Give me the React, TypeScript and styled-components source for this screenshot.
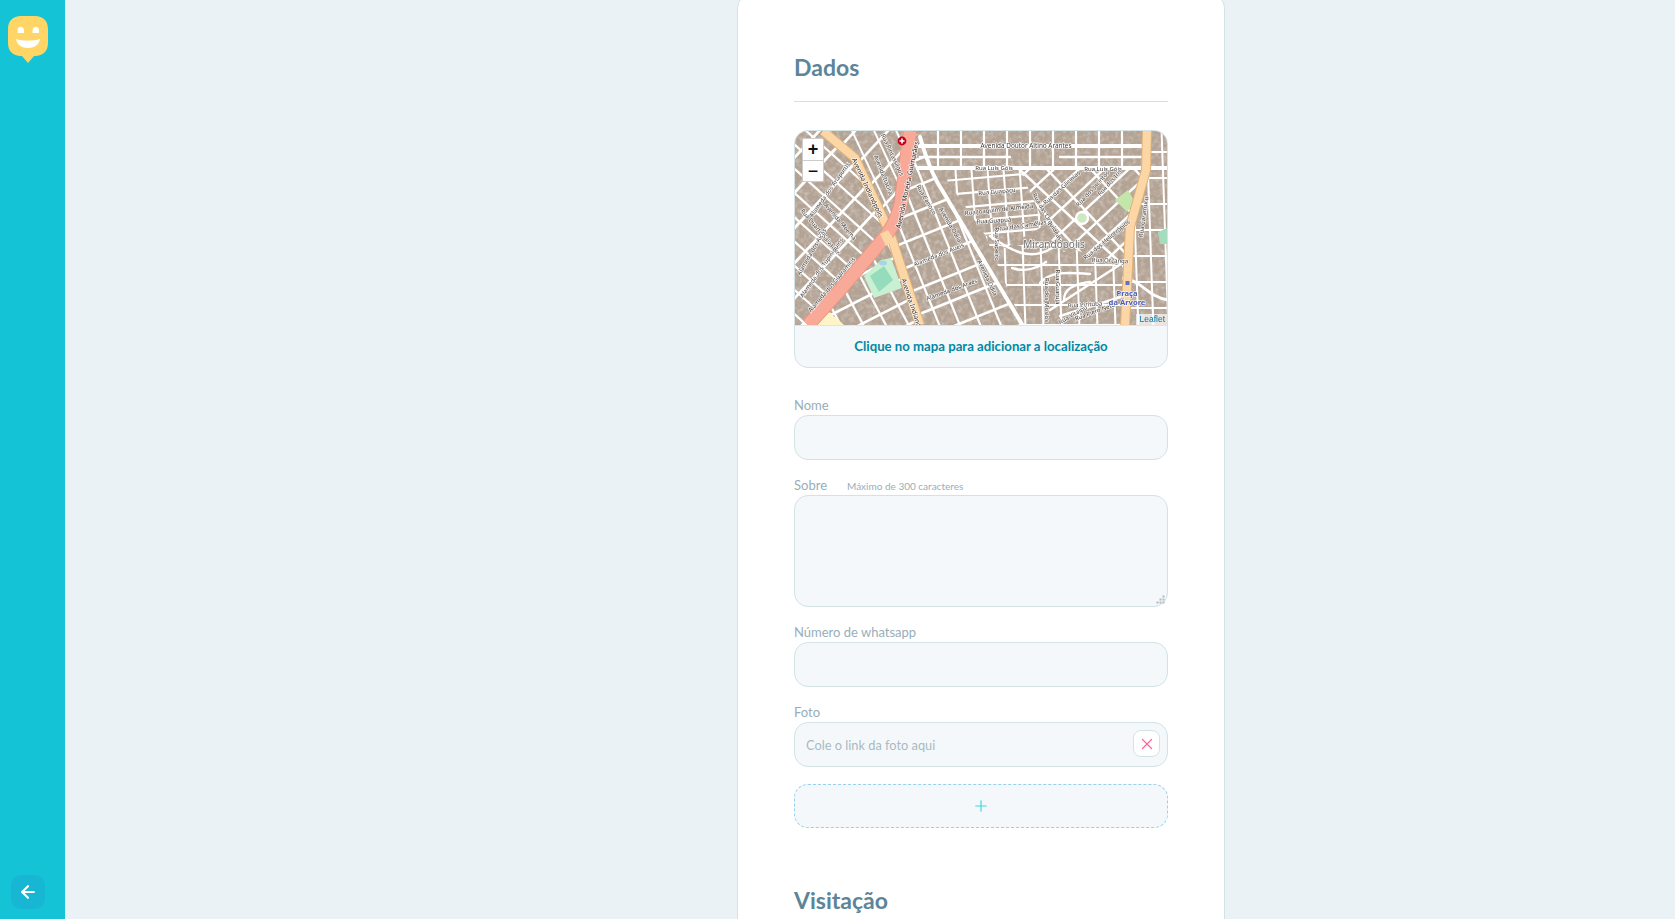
import styled, { createGlobalStyle } from "styled-components";
import { ArrowLeft, Plus, X } from "lucide-react";

const GlobalStyle = createGlobalStyle`
	* {
		box-sizing: border-box;
	}

	html,
	body {
		margin: 0;
		height: 100%;
		overflow: hidden;
		background: #ebf2f5;
		font-family: Lato, "Open Sans", sans-serif;
	}
`;

const Page = styled.div`
	display: flex;
	height: 100vh;
	overflow: hidden;
`;

const Sidebar = styled.aside`
	display: flex;
	flex-direction: column;
	align-items: center;
	justify-content: space-between;
	flex: 0 0 65px;
	padding: 16px 9px 10px 0;
	background: #15c3d6;
`;

const BackButton = styled.button`
	display: flex;
	align-items: center;
	justify-content: center;
	width: 34px;
	height: 34px;
	padding: 0;
	border: 0;
	border-radius: 10px;
	background: #17b6d3;
	color: #fff;
`;

const Main = styled.main`
	flex: 1;
	padding-left: 672px;
`;

const Card = styled.form`
	width: 488px;
	margin-top: -6px;
	padding: 0 56px 80px;
	background: #fff;
	border: 1px solid #d3e2e5;
	border-radius: 14px;
`;

const Legend = styled.h2`
	margin: 57px 0 0;
	font-size: 23px;
	line-height: 30px;
	font-weight: 700;
	color: #5c8599;
`;

const Rule = styled.hr`
	height: 1px;
	margin: 19px 0 28px;
	border: 0;
	background: #d3e2e5;
`;

const MapBox = styled.div`
	overflow: hidden;
	background: #f5f8fa;
	border: 1px solid #d3e2e5;
	border-radius: 14px;
`;

const MapFrame = styled.div`
	position: relative;
	height: 194px;
`;

const MapCaption = styled.div`
	height: 42px;
	border-top: 1px solid #dde3f0;
	font-size: 13.2px;
	font-weight: 700;
	line-height: 40px;
	text-align: center;
	color: #0089a5;
`;

const ZoomControl = styled.div`
	position: absolute;
	top: 7px;
	left: 7px;
	width: 22px;
	overflow: hidden;
	background: #fff;
	border: 1px solid #ccc;
	border-radius: 2px;
`;

const ZoomButton = styled.div<{ $thin?: boolean }>`
	height: 21px;
	font-family: "Liberation Sans", sans-serif;
	font-size: 18px;
	font-weight: ${(p) => (p.$thin ? 400 : 700)};
	line-height: 20px;
	text-align: center;
	color: #111;

	& + & {
		border-top: 1px solid #ccc;
	}
`;

const Attribution = styled.div`
	position: absolute;
	right: 0;
	bottom: 0;
	padding: 0 2px 0 3px;
	background: rgba(255, 255, 255, 0.7);
	font-family: "Liberation Sans", sans-serif;
	font-size: 8.5px;
	line-height: 11px;
	color: #0078a8;
`;

const Field = styled.div<{ $first?: boolean }>`
	margin-top: ${(p) => (p.$first ? "29px" : "17px")};
`;

const Label = styled.label`
	display: block;
	height: 18px;
	font-size: 13px;
	line-height: 16px;
	color: #98aeb9;
`;

const Hint = styled.span`
	margin-left: 20px;
	font-size: 10px;
	color: #98aeb9;
`;

const Input = styled.input`
	display: block;
	width: 100%;
	height: 45px;
	padding: 0 11px;
	background: #f5f8fa;
	border: 1px solid #d3e2e5;
	border-radius: 14px;
	outline: none;
	font-family: inherit;
	font-size: 12.8px;
	color: #5c8599;

	&::placeholder {
		color: #a9bac3;
	}
`;

const TextAreaBox = styled.div`
	position: relative;
`;

const TextArea = styled.textarea`
	display: block;
	width: 100%;
	height: 112px;
	padding: 12px;
	background: #f5f8fa;
	border: 1px solid #d3e2e5;
	border-radius: 14px;
	outline: none;
	resize: none;
`;

const ResizeGrip = styled.svg`
	position: absolute;
	right: 3px;
	bottom: 3px;
`;

const PhotoRow = styled.div`
	position: relative;
`;

const RemoveButton = styled.button`
	position: absolute;
	top: 8px;
	right: 8px;
	display: flex;
	align-items: center;
	justify-content: center;
	width: 27px;
	height: 27px;
	padding: 0;
	background: #fff;
	border: 1px solid #d3e2e5;
	border-radius: 8px;
	color: #ff669d;
`;

const AddButton = styled.button`
	display: flex;
	align-items: center;
	justify-content: center;
	width: 100%;
	height: 44px;
	margin-top: 17px;
	padding: 0 0 1px;
	background: #f5f8fa;
	border: 1px dashed #96d2f0;
	border-radius: 14px;
	color: #45d4e2;
`;

const MapSvg = styled.svg`
	display: block;
	width: 100%;
	height: 100%;
`;

const Street = styled.line<{ $w: number }>`
	stroke: #fff;
	stroke-width: ${(p) => p.$w}px;
`;

const Curve = styled.path<{ $w?: number }>`
	fill: none;
	stroke: #fff;
	stroke-width: ${(p) => p.$w ?? 2}px;
	stroke-linecap: round;
`;

const Road = styled.path<{ $w: number; $color: string }>`
	fill: none;
	stroke: ${(p) => p.$color};
	stroke-width: ${(p) => p.$w}px;
	stroke-linejoin: round;
`;

const MapLabel = styled.text<{ $size?: number; $color?: string; $bold?: boolean }>`
	font-family: "Noto Sans", "Open Sans", sans-serif;
	font-size: ${(p) => p.$size ?? 6}px;
	font-weight: ${(p) => (p.$bold ? 700 : 400)};
	fill: ${(p) => p.$color ?? "#3f3a36"};
	stroke: rgba(255, 255, 255, 0.85);
	stroke-width: 1.3px;
	paint-order: stroke;
	text-anchor: middle;
	dominant-baseline: middle;
`;

type Grid = { clip: string; cx: number; cy: number; angle: number; spacing: number; w: number };

const REGIONS: Record<string, string> = {
	west: "795,131 823,131 855,158 886,235 808,325 795,325",
	wedge: "823,131 907,131 903,203 887,237 855,158",
	odila: "913,131 920,137 940,187 1023,325 920,325 890,233 903,203",
	south: "887,237 920,325 808,325",
	north: "918,131 1146,131 1146,170 934,170",
	rows: "940,170 1020,170 1045,225 1005,248 985,235",
	fan: "1020,170 1142,170 1128,232 1124,268 1050,240 1045,225",
	lower: "985,235 1005,248 1050,240 1124,268 1122,325 1023,325",
	east: "1150,131 1168,131 1168,325 1130,325 1132,232",
};

const GRIDS: Grid[] = [
	{ clip: "west", cx: 830, cy: 225, angle: -47, spacing: 24, w: 2.8 },
	{ clip: "west", cx: 830, cy: 225, angle: 42, spacing: 18, w: 2.2 },
	{ clip: "wedge", cx: 875, cy: 180, angle: -47, spacing: 24, w: 2.6 },
	{ clip: "wedge", cx: 875, cy: 180, angle: 65, spacing: 20, w: 2 },
	{ clip: "odila", cx: 950, cy: 250, angle: -22, spacing: 24, w: 2.6 },
	{ clip: "odila", cx: 950, cy: 250, angle: 68, spacing: 19, w: 2.2 },
	{ clip: "south", cx: 870, cy: 295, angle: -27, spacing: 22, w: 2.6 },
	{ clip: "south", cx: 870, cy: 295, angle: 62, spacing: 20, w: 2.2 },
	{ clip: "north", cx: 1030, cy: 150, angle: 90, spacing: 23, w: 2.2 },
	{ clip: "rows", cx: 990, cy: 205, angle: -5, spacing: 14, w: 2.2 },
	{ clip: "rows", cx: 990, cy: 205, angle: 86, spacing: 16, w: 2 },
	{ clip: "fan", cx: 1085, cy: 210, angle: -43, spacing: 17, w: 2.4 },
	{ clip: "fan", cx: 1085, cy: 210, angle: 47, spacing: 32, w: 2.4 },
	{ clip: "lower", cx: 1060, cy: 285, angle: 0, spacing: 20, w: 2 },
	{ clip: "lower", cx: 1060, cy: 285, angle: 88, spacing: 18, w: 2 },
	{ clip: "east", cx: 1150, cy: 230, angle: 0, spacing: 26, w: 2 },
	{ clip: "east", cx: 1150, cy: 230, angle: 88, spacing: 15, w: 2 },
];

const gridLines = ({ cx, cy, angle, spacing }: Grid) => {
	const rad = (angle * Math.PI) / 180;
	const dx = Math.cos(rad);
	const dy = Math.sin(rad);
	const lines = [];
	for (let i = -16; i <= 16; i++) {
		const ox = cx - dy * spacing * i;
		const oy = cy + dx * spacing * i;
		lines.push({ x1: ox - dx * 400, y1: oy - dy * 400, x2: ox + dx * 400, y2: oy + dy * 400 });
	}
	return lines;
};

const MAJOR_STREETS = [
	"M920 137 C926 158 932 175 942 190 L1023 326",
	"M918 146 H1146",
	"M918 168 H1168",
];

const MINOR_STREETS = [
	"M920 157 H1010",
	"M1060 157 H1146",
	"M1020 170 L1124 266",
	"M990 236 C1010 250 1030 262 1052 248",
	"M1046 262 C1034 270 1024 272 1012 268",
	"M1040 283 C1050 272 1062 272 1090 274",
	"M1064 300 C1064 290 1072 284 1090 282",
	"M1060 316 L1124 296",
	"M1124 262 L1050 310",
];

const LABELS: { x: number; y: number; a?: number; t: string; size?: number; color?: string; bold?: boolean }[] = [
	{ x: 1026, y: 146, t: "Avenida Doutor Altino Arantes", size: 6.4 },
	{ x: 994, y: 168, t: "Rua Luís Góis" },
	{ x: 1103, y: 169, t: "Rua Luís Góis" },
	{ x: 997, y: 192, a: -5, t: "Rua Guapaçu" },
	{ x: 999, y: 210, a: -6, t: "Rua Joaquim de Almeida" },
	{ x: 994, y: 221, a: -4, t: "Rua Guapuá" },
	{ x: 1022, y: 226, a: -8, t: "Rua das Camélias" },
	{ x: 1062, y: 188, a: -42, t: "Rua das Glicínias" },
	{ x: 1093, y: 189, a: -48, t: "Rua dos Jacintos" },
	{ x: 1110, y: 183, a: -48, t: "Rua dos Iris" },
	{ x: 1047, y: 217, a: 60, t: "Rua das Orquídeas" },
	{ x: 1107, y: 240, a: -40, t: "Rua dos Heliotrópios" },
	{ x: 1110, y: 261, a: 2, t: "Rua Orçanga" },
	{ x: 1144, y: 217, a: -82, t: "Rua Caramuru" },
	{ x: 1085, y: 305, a: -4, t: "Rua Pirituba" },
	{ x: 1073, y: 315, a: -30, t: "Rua Vitaipu" },
	{ x: 1095, y: 312, a: -20, t: "Rua Piero Neto" },
	{ x: 1047, y: 300, a: 90, t: "Rua dos Moslos" },
	{ x: 1058, y: 287, a: 90, t: "Rua Guarujá" },
	{ x: 997, y: 244, a: 90, t: "Rua Sapeíro" },
	{ x: 950, y: 225, a: 60, t: "Avenida Odila" },
	{ x: 987, y: 278, a: 65, t: "Avenida Odila" },
	{ x: 926, y: 200, a: 60, t: "Rua Carioso" },
	{ x: 939, y: 255, a: -22, t: "Alameda dos Aueis" },
	{ x: 952, y: 290, a: -20, t: "Alameda dos Araés" },
	{ x: 908, y: 185, a: -78, t: "Avenida Moreira Guimarães", size: 6.8, color: "#2e2422" },
	{ x: 867, y: 188, a: 65, t: "Avenida Indianópolis", size: 6.6, color: "#2e2422" },
	{ x: 911, y: 303, a: 72, t: "Avenida Indianó", size: 6.6, color: "#2e2422" },
	{ x: 883, y: 175, a: 68, t: "Avenida Itacira" },
	{ x: 892, y: 155, a: 65, t: "Rua Pintassilgos" },
	{ x: 830, y: 190, a: -55, t: "Alameda dos Anapurús" },
	{ x: 840, y: 222, a: 50, t: "Avenida Moema" },
	{ x: 820, y: 232, a: 50, t: "Rua Duarte Salvador" },
	{ x: 812, y: 252, a: -60, t: "Alameda dos Aicás" },
	{ x: 822, y: 268, a: -55, t: "Alameda dos Tupiniquins" },
	{ x: 832, y: 285, a: -50, t: "Alameda dos Guaramiris" },
	{ x: 1054, y: 245, t: "Mirandópolis", size: 10, color: "#6f6f6f" },
	{ x: 1127, y: 294, t: "Praça", size: 7.6, color: "#4a5cc0", bold: true },
	{ x: 1127, y: 303, t: "da Árvore", size: 7.6, color: "#4a5cc0", bold: true },
];

const HappyLogo = () => (
	<svg width="40" height="48" viewBox="0 0 40 48">
		<path
			d="M13 0H27C35 0 40 5 40 13V27C40 35 35 40 27 40H26L20 47L14 40H13C5 40 0 35 0 27V13C0 5 5 0 13 0Z"
			fill="#ffd666"
		/>
		<path d="M9.5 17V14.5C9.5 9.5 16 9.5 16 14.5V17Z" fill="#fff" />
		<path d="M24.5 17V14.5C24.5 9.5 31 9.5 31 14.5V17Z" fill="#fff" />
		<path d="M8 23C14 25 26 25 32 23C31 29 26 32 20 32C14 32 9 29 8 23Z" fill="#fff" />
	</svg>
);

const StreetMap = () => (
	<MapSvg viewBox="795 131 372 194" preserveAspectRatio="none">
		<defs>
			{Object.entries(REGIONS).map(([id, points]) => (
				<clipPath id={id} key={id}>
					<polygon points={points} />
				</clipPath>
			))}
			<filter id="speckle" x="0" y="0" width="100%" height="100%">
				<feTurbulence type="fractalNoise" baseFrequency="0.22" numOctaves="2" seed="4" />
				<feColorMatrix values="0 0 0 0 0.81  0 0 0 0 0.76  0 0 0 0 0.7  1 0 0 0 -0.42" />
			</filter>
			<filter id="soft">
				<feGaussianBlur stdDeviation="0.35" />
			</filter>
		</defs>
		<rect x="795" y="131" width="372" height="194" fill="#b3a395" />
		<rect x="795" y="131" width="372" height="194" filter="url(#speckle)" />
		<g filter="url(#soft)">
			{GRIDS.map((grid, i) => (
				<g clipPath={`url(#${grid.clip})`} key={i}>
					{gridLines(grid).map((line, j) => (
						<Street {...line} $w={grid.w} key={j} />
					))}
				</g>
			))}
			{MAJOR_STREETS.map((d) => (
				<Curve d={d} $w={4} key={d} />
			))}
			{MINOR_STREETS.map((d) => (
				<Curve d={d} $w={2.4} key={d} />
			))}

			<polygon points="864,276 881,260 891,258 902,288 874,298" fill="#c9f0d2" />
			<polygon points="870,276 884,266 893,280 879,292" fill="#94dcbc" />
			<ellipse cx="883" cy="263" rx="4" ry="2.5" fill="#a9d3e6" />
			<polygon points="1115,200 1128,190 1135,202 1127,212" fill="#c4e6aa" />
			<polygon points="1158,232 1167,228 1167,244 1160,244" fill="#a5dcc0" />
			<polygon points="817,325 828,311 844,325" fill="#fdf5c8" />

			<circle cx="1082" cy="218" r="6" fill="#cfe8c4" stroke="#fff" strokeWidth="2.4" />
			<path d="M1122 278 C1142 280 1146 296 1168 300" fill="none" stroke="#fff" strokeWidth="3" />

			<Road d="M823 131 L855 158 L890 233 L920 325" $w={10} $color="#e0b27a" />
			<Road d="M823 131 L855 158 L890 233 L920 325" $w={8} $color="#fcd6a4" />
			<Road d="M1147 131 L1146 170 L1130 227 L1127 287 L1125 325" $w={10} $color="#e0b27a" />
			<Road d="M1147 131 L1146 170 L1130 227 L1127 287 L1125 325" $w={8} $color="#fcd6a4" />
			<Road d="M910 131 L905 170 L901 203 C896 222 890 230 885 237 L840 290 L808 325" $w={14} $color="#e8907c" />
			<Road d="M910 131 L905 170 L901 203 C896 222 890 230 885 237 L840 290 L808 325" $w={12.5} $color="#f9a998" />
			<polygon points="880,234 888,230 894,240 886,246" fill="#fcd6a4" />

			<rect x="1125.5" y="281" width="4" height="4" fill="#6470c8" />
			<circle cx="902" cy="141" r="4.4" fill="#c4001f" />
			<path d="M902 138.5V143.5M899.5 141H904.5" stroke="#fff" strokeWidth="1.6" />

			{LABELS.map((l) => (
				<MapLabel
					x={l.x}
					y={l.y}
					transform={l.a ? `rotate(${l.a} ${l.x} ${l.y})` : undefined}
					$size={l.size}
					$color={l.color}
					$bold={l.bold}
					key={`${l.t}${l.x}`}
				>
					{l.t}
				</MapLabel>
			))}
		</g>
	</MapSvg>
);

const App = () => {
	return (
		<>
			<GlobalStyle />
			<Page>
				<Sidebar>
					<HappyLogo />
					<BackButton type="button" aria-label="Voltar">
						<ArrowLeft size={20} strokeWidth={2.6} />
					</BackButton>
				</Sidebar>
				<Main>
					<Card>
						<Legend>Dados</Legend>
						<Rule />
						<MapBox>
							<MapFrame>
								<StreetMap />
								<ZoomControl>
									<ZoomButton>+</ZoomButton>
									<ZoomButton $thin>−</ZoomButton>
								</ZoomControl>
								<Attribution>Leaflet</Attribution>
							</MapFrame>
							<MapCaption>Clique no mapa para adicionar a localização</MapCaption>
						</MapBox>
						<Field $first>
							<Label>Nome</Label>
							<Input />
						</Field>
						<Field>
							<Label>
								Sobre<Hint>Máximo de 300 caracteres</Hint>
							</Label>
							<TextAreaBox>
								<TextArea />
								<ResizeGrip width="9" height="9" viewBox="0 0 9 9" fill="#b4b9bd">
									<rect x="6.5" y="0.5" width="2" height="2" />
									<rect x="3.5" y="3.5" width="2" height="2" />
									<rect x="6.5" y="3.5" width="2" height="2" />
									<rect x="0.5" y="6.5" width="2" height="2" />
									<rect x="3.5" y="6.5" width="2" height="2" />
									<rect x="6.5" y="6.5" width="2" height="2" />
								</ResizeGrip>
							</TextAreaBox>
						</Field>
						<Field>
							<Label>Número de whatsapp</Label>
							<Input />
						</Field>
						<Field>
							<Label>Foto</Label>
							<PhotoRow>
								<Input placeholder="Cole o link da foto aqui" />
								<RemoveButton type="button" aria-label="Remover">
									<X size={18} strokeWidth={1.7} />
								</RemoveButton>
							</PhotoRow>
						</Field>
						<AddButton type="button" aria-label="Adicionar foto">
							<Plus size={18} strokeWidth={1.6} />
						</AddButton>
						<Legend>Visitação</Legend>
					</Card>
				</Main>
			</Page>
		</>
	);
};

export default App;
